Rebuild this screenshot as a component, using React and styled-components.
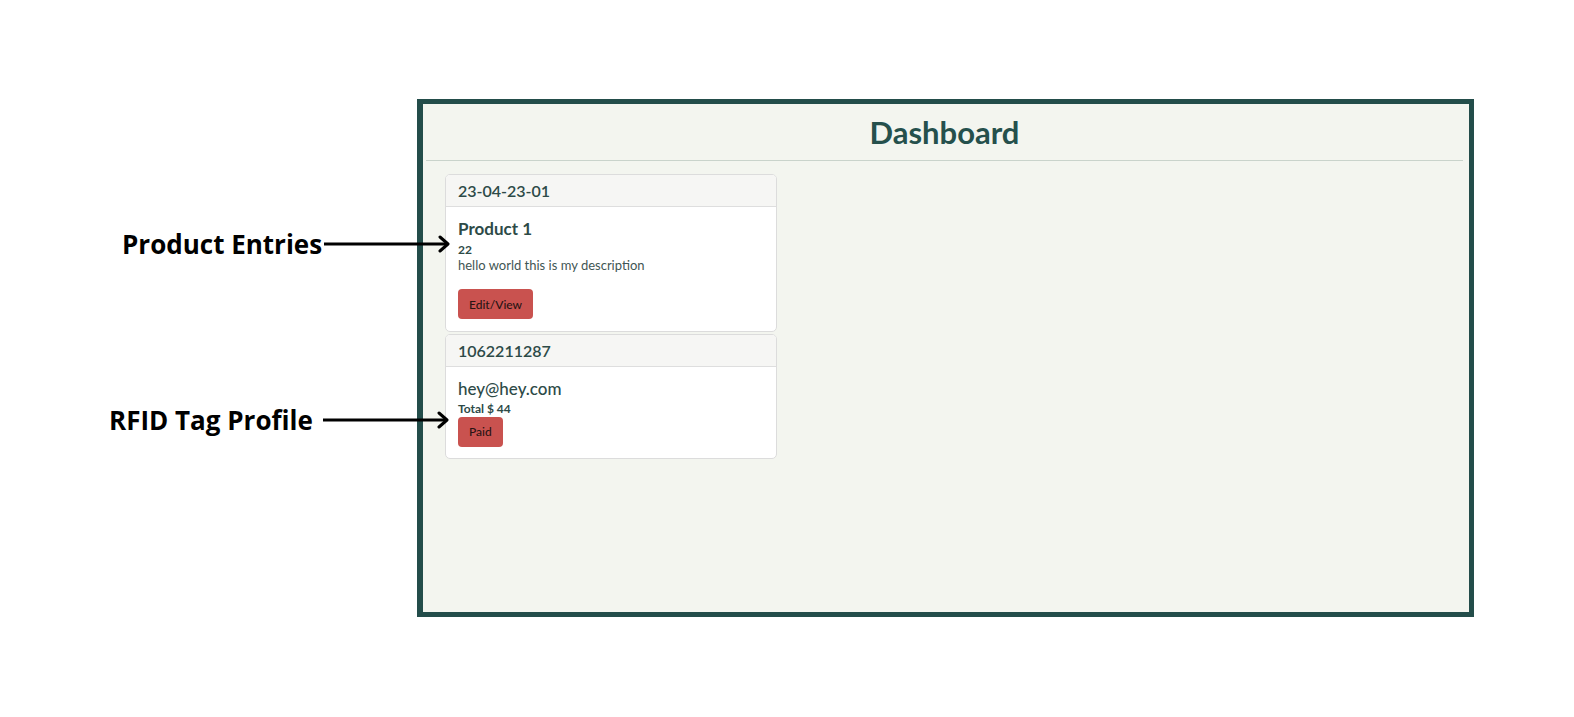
import React from "react";
import styled, { createGlobalStyle } from "styled-components";

const GlobalStyle = createGlobalStyle`
  * { box-sizing: border-box; }
  body {
    margin: 0;
    background: #ffffff;
    font-family: Lato, "Noto Sans", sans-serif;
  }
`;

const Page = styled.div`
  position: relative;
  height: 717px;
  padding: 99px 0 0 417px;
  overflow: hidden;
`;

const Frame = styled.div`
  width: 1057px;
  height: 518px;
  border: 5px solid #234d4a;
  border-left-width: 6px;
  background: #f3f5ef;
  padding: 0 6px 0 3px;
`;

const TitleBar = styled.div`
  height: 57px;
  display: flex;
  align-items: center;
  justify-content: center;
  border-bottom: 1px solid #c9d3cb;
`;

const Title = styled.h1`
  margin: 0;
  font-size: 31px;
  font-weight: 700;
  color: #25504c;
`;

const Content = styled.div`
  padding: 13px 0 0 19px;
`;

const CardList = styled.div`
  width: 332px;
  display: flex;
  flex-direction: column;
  gap: 2px;
`;

const Card = styled.div`
  background: #ffffff;
  border: 1px solid #dcdcdc;
  border-radius: 5px;
  overflow: hidden;
`;

const CardHeader = styled.div`
  height: 32px;
  display: flex;
  align-items: center;
  padding: 0 12px;
  background: #f6f6f4;
  border-bottom: 1px solid #dedede;
  color: #2d4a47;
  font-size: 16px;
  font-weight: 600;
`;

const CardBody = styled.div`
  padding: 12px 12px ${(p) => p.$bottom}px;
  color: #2d4a47;
`;

const ItemTitle = styled.div`
  font-size: ${(p) => p.$size}px;
  font-weight: ${(p) => p.$weight};
  line-height: 1.2;
`;

const Small = styled.div`
  margin-top: ${(p) => p.$mt}px;
  font-size: 12px;
  font-weight: 700;
  line-height: 15px;
`;

const Description = styled.div`
  font-size: 13px;
  line-height: 17px;
  color: #3f5654;
`;

const Button = styled.button`
  display: block;
  margin-top: ${(p) => p.$mt}px;
  height: 30px;
  padding: 0 11px;
  border: none;
  border-radius: 4px;
  background: #c9524f;
  color: #2a1414;
  font-family: inherit;
  font-size: 12px;
  font-weight: 500;
`;

const Annotation = styled.div`
  position: absolute;
  left: ${(p) => p.$x}px;
  top: ${(p) => p.$y}px;
  display: flex;
  align-items: center;
  gap: ${(p) => p.$gap}px;
`;

const AnnotationLabel = styled.span`
  font-family: "Open Sans", sans-serif;
  font-weight: 700;
  font-size: 26px;
  color: #000000;
  white-space: nowrap;
`;

function Arrow({ width }) {
  return (
    <svg width={width} height="20" viewBox={`0 0 ${width} 20`}>
      <line x1="0" y1="10" x2={width - 2} y2="10" stroke="#000" strokeWidth="3" />
      <polyline
        points={`${width - 10},3 ${width - 2},10 ${width - 10},17`}
        fill="none"
        stroke="#000"
        strokeWidth="3"
        strokeLinecap="round"
        strokeLinejoin="round"
      />
    </svg>
  );
}

export default function App() {
  return (
    <>
      <GlobalStyle />
      <Page>
        <Frame>
          <TitleBar>
            <Title>Dashboard</Title>
          </TitleBar>
          <Content>
            <CardList>
              <Card>
                <CardHeader>23-04-23-01</CardHeader>
                <CardBody $bottom={12}>
                  <ItemTitle $size={17} $weight={700}>Product 1</ItemTitle>
                  <Small $mt={3}>22</Small>
                  <Description>hello world this is my description</Description>
                  <Button $mt={15}>Edit/View</Button>
                </CardBody>
              </Card>
              <Card>
                <CardHeader>1062211287</CardHeader>
                <CardBody $bottom={11}>
                  <ItemTitle $size={17} $weight={500}>hey@hey.com</ItemTitle>
                  <Small $mt={1}>Total $ 44</Small>
                  <Button $mt={1}>Paid</Button>
                </CardBody>
              </Card>
            </CardList>
          </Content>
        </Frame>
        <Annotation $x={122} $y={226} $gap={2}>
          <AnnotationLabel>Product Entries</AnnotationLabel>
          <Arrow width={126} />
        </Annotation>
        <Annotation $x={109} $y={402} $gap={10}>
          <AnnotationLabel>RFID Tag Profile</AnnotationLabel>
          <Arrow width={126} />
        </Annotation>
      </Page>
    </>
  );
}
